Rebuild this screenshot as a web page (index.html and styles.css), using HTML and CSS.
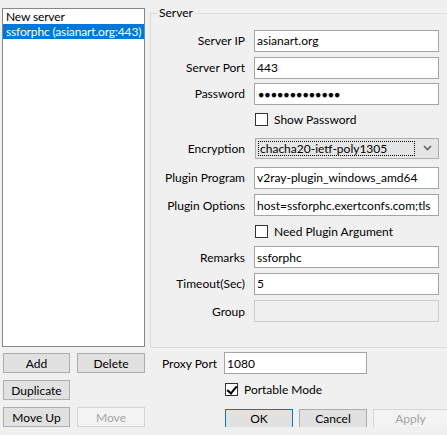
FILE: index.html
```html
<!DOCTYPE html>
<html lang="en-US">
<head>
    <meta charset="UTF-8" />
    <title>Edit Servers</title>
    <link rel="stylesheet" href="styles.css">
</head>
<body>
    <div class="dialog">
        <!-- Server list and its buttons -->
        <div class="side">
            <ul class="server-list">
                <li>New server</li>
                <li class="selected">ssforphc (asianart.org:443)</li>
            </ul>
            <div class="list-buttons">
                <button>Add</button>
                <button>Delete</button>
                <button>Duplicate</button>
                <span></span>
                <button>Move Up</button>
                <button disabled>Move</button>
            </div>
        </div>

        <div class="main">
            <fieldset class="server-group">
                <legend>Server</legend>
                <div class="form-grid">
                    <label for="server-ip">Server IP</label>
                    <input type="text" id="server-ip" value="asianart.org" />

                    <label for="server-port">Server Port</label>
                    <input type="text" id="server-port" value="443" />

                    <label for="password">Password</label>
                    <input type="text" id="password" class="secret" value="●●●●●●●●●●●●●" readonly />

                    <span></span>
                    <label class="check-row"><input type="checkbox" /> Show Password</label>

                    <label for="encryption">Encryption</label>
                    <div class="combo" id="encryption">
                        <span class="combo-text">chacha20-ietf-poly1305</span>
                        <svg class="combo-arrow" width="9" height="6" viewBox="0 0 9 6">
                            <path d="M1 1 L4.5 4.5 L8 1" fill="none" stroke="#606060" stroke-width="1.6" />
                        </svg>
                    </div>

                    <label for="plugin-program">Plugin Program</label>
                    <input type="text" id="plugin-program" value="v2ray-plugin_windows_amd64" />

                    <label for="plugin-options">Plugin Options</label>
                    <input type="text" id="plugin-options" value="host=ssforphc.exertconfs.com;tls" />

                    <span></span>
                    <label class="check-row"><input type="checkbox" /> Need Plugin Argument</label>

                    <label for="remarks">Remarks</label>
                    <input type="text" id="remarks" value="ssforphc" />

                    <label for="timeout">Timeout(Sec)</label>
                    <input type="text" id="timeout" value="5" />

                    <label for="group">Group</label>
                    <input type="text" id="group" value="" disabled />
                </div>
            </fieldset>

            <div class="proxy-settings">
                <label for="proxy-port">Proxy Port</label>
                <input type="text" id="proxy-port" value="1080" />

                <span></span>
                <label class="check-row"><input type="checkbox" checked /> Portable Mode</label>

                <span></span>
                <div class="dialog-buttons">
                    <button class="default">OK</button>
                    <button>Cancel</button>
                    <button disabled>Apply</button>
                </div>
            </div>
        </div>
    </div>
</body>
</html>
```

FILE: styles.css
```css
* {
    margin: 0;
    padding: 0;
    box-sizing: border-box;
}

body {
    font-family: 'Lato', 'Open Sans', sans-serif;
    font-size: 12px;
    background-color: #f0f0f0;
    color: #000;
    overflow: hidden;
}

.dialog {
    display: flex;
    padding: 5px 0 0 2px;
}

/* Left column */
.side {
    width: 143px;
    padding-top: 3px;
}

.server-list {
    list-style: none;
    height: 339px;
    background: #fff;
    border: 1px solid #828790;
    line-height: 15px;
}

.server-list li {
    padding: 0 0 0 3px;
    letter-spacing: -0.15px;
    white-space: nowrap;
    overflow: hidden;
}

.server-list .selected {
    background-color: #0078d7;
    color: #fff;
}

.list-buttons {
    display: grid;
    grid-template-columns: 67px 68px;
    grid-template-rows: 20px 20px 20px;
    column-gap: 7px;
    row-gap: 7px;
    margin: 6px 0 0 1px;
}

button {
    font: inherit;
    color: #000;
    background-color: #e1e1e1;
    border: 1px solid #adadad;
}

button:disabled {
    color: #a3a3a3;
    background-color: #f3f3f3;
    border-color: #d5d5d5;
}

button.default {
    border-color: #0078d7;
}

/* Right column */
.main {
    margin-left: 5px;
    width: 305px;
}

.server-group {
    border: 1px solid #dcdcdc;
    padding: 0 0 0 6px;
    height: 343px;
}

.server-group legend {
    padding: 0 2px;
    line-height: 16px;
}

.form-grid {
    display: grid;
    grid-template-columns: 88px 185px;
    grid-template-rows: 27px 27px 25px 27px 30px 29px 26px 26px 26px 27px 28px;
    column-gap: 9px;
    align-items: center;
    margin-top: 6px;
}

.form-grid > label {
    text-align: right;
    white-space: nowrap;
}

input[type='text'] {
    font: inherit;
    height: 22px;
    padding: 0 2px;
    border: 1px solid #a5a5a5;
    background: #fff;
    color: #000;
    outline: none;
}

input[type='text']:disabled {
    background: #f0f0f0;
    border-color: #cccccc;
}

input.secret {
    font-family: 'Liberation Sans', sans-serif;
    font-size: 10.5px;
    padding-left: 3px;
}

.check-row {
    display: flex;
    align-items: center;
    gap: 6px;
    margin-left: 1px;
}

input[type='checkbox'] {
    appearance: none;
    width: 13px;
    height: 13px;
    border: 1px solid #333;
    background: #fff;
    position: relative;
}

input[type='checkbox']:checked::after {
    content: '';
    position: absolute;
    left: 3px;
    top: 0;
    width: 4px;
    height: 8px;
    border: solid #000;
    border-width: 0 2px 2px 0;
    transform: rotate(40deg);
}

.combo {
    display: flex;
    align-items: center;
    height: 21px;
    margin-left: 1px;
    padding: 0 2px;
    background: #e5e5e5;
    border: 1px solid #adadad;
}

.combo-text {
    flex: 1;
    height: 15px;
    line-height: 13px;
    padding-left: 1px;
    border: 1px dotted #000;
}

.combo-arrow {
    margin: 0 4px 0 8px;
}

/* Proxy port, portable mode and dialog buttons */
.proxy-settings {
    display: grid;
    grid-template-columns: 62px 1fr;
    grid-template-rows: 22px 23px 19px;
    row-gap: 4px;
    align-items: center;
    margin-top: 4px;
    padding-left: 12px;
}

.proxy-settings input[type='text'] {
    width: 143px;
}

.dialog-buttons {
    display: flex;
    gap: 6px;
    margin-left: 1px;
    margin-top: 8px;
}

.dialog-buttons button {
    width: 68px;
    height: 19px;
}

.dialog-buttons button:disabled {
    width: 75px;
}
```
